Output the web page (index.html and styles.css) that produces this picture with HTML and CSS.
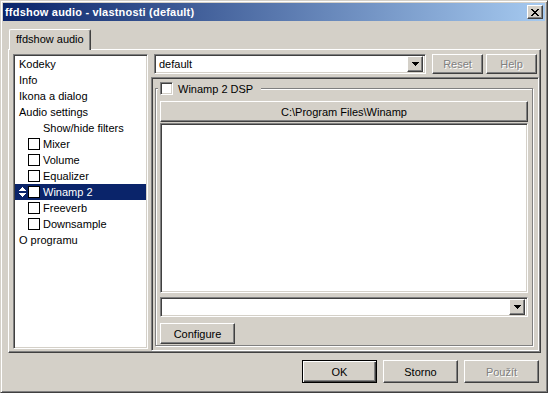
FILE: index.html
```html
<!DOCTYPE html>
<html lang="cs">
<head>
    <meta charset="UTF-8">
    <title>ffdshow audio - vlastnosti (default)</title>
    <link rel="stylesheet" href="styles.css">
</head>
<body>
    <div class="window">
        <div class="titlebar">
            <span class="title">ffdshow audio - vlastnosti (default)</span>
            <div class="btn close">
                <svg width="8" height="7" viewBox="0 0 8 7"><path d="M0 0h2v1h-2zM6 0h2v1h-2zM1 1h2v1h-2zM5 1h2v1h-2zM2 2h4v1h-4zM3 3h2v1h-2zM2 4h4v1h-4zM1 5h2v1h-2zM5 5h2v1h-2zM0 6h2v1h-2zM6 6h2v1h-2z" fill="#000"/></svg>
            </div>
        </div>

        <div class="tabs">
            <div class="tab">ffdshow audio</div>
        </div>

        <div class="panel">
            <div class="tree">
                <div class="item">Kodeky</div>
                <div class="item">Info</div>
                <div class="item">Ikona a dialog</div>
                <div class="item">Audio settings</div>
                <div class="item sub">Show/hide filters</div>
                <div class="item sub"><span class="tick"></span>Mixer</div>
                <div class="item sub"><span class="tick"></span>Volume</div>
                <div class="item sub"><span class="tick"></span>Equalizer</div>
                <div class="item selected">
                    <svg class="updown" width="7" height="11" viewBox="0 0 7 11"><path d="M3 0h1v1h1v1h1v1h1v1h-7v-1h1v-1h1v-1h1zM0 6h7v1h-1v1h-1v1h-1v1h-1v-1h-1v-1h-1v-1h-1z" fill="#fff"/></svg>
                    <span class="tick"></span>Winamp 2
                </div>
                <div class="item sub"><span class="tick"></span>Freeverb</div>
                <div class="item sub"><span class="tick"></span>Downsample</div>
                <div class="item">O programu</div>
            </div>

            <div class="page">
                <div class="toprow">
                    <div class="field combo preset">
                        <span class="value">default</span>
                        <div class="btn drop">
                            <svg width="7" height="4" viewBox="0 0 7 4"><path d="M0 0h7v1h-1v1h-1v1h-1v1h-1v-1h-1v-1h-1v-1h-1z" fill="#000"/></svg>
                        </div>
                    </div>
                    <div class="btn small disabled">Reset</div>
                    <div class="btn small disabled">Help</div>
                </div>

                <div class="frame">
                    <div class="group">
                        <div class="legend">
                            <span class="field check"></span>
                            <span>Winamp 2 DSP</span>
                        </div>
                        <div class="btn path">C:\Program Files\Winamp</div>
                        <div class="field list"></div>
                        <div class="field combo plugin">
                            <span class="value"></span>
                            <div class="btn drop">
                                <svg width="7" height="4" viewBox="0 0 7 4"><path d="M0 0h7v1h-1v1h-1v1h-1v1h-1v-1h-1v-1h-1v-1h-1z" fill="#000"/></svg>
                            </div>
                        </div>
                        <div class="btn configure">Configure</div>
                    </div>
                </div>
            </div>
        </div>

        <div class="footer">
            <div class="btn dialog default">OK</div>
            <div class="btn dialog">Storno</div>
            <div class="btn dialog disabled">Použít</div>
        </div>
    </div>
</body>
</html>
```

FILE: styles.css
```css
* {
    box-sizing: border-box;
}
body {
    margin: 0;
    background: #d4d0c8;
    font-family: "Liberation Sans", Arial, sans-serif;
    font-size: 11px;
    color: #000;
}
.window {
    width: 548px;
    height: 393px;
    background: #d4d0c8;
    border: 1px solid;
    border-color: #d4d0c8 #404040 #404040 #d4d0c8;
    box-shadow: inset 1px 1px #fff, inset -1px -1px #808080;
    padding: 2px;
    display: flex;
    flex-direction: column;
}

/* title bar */
.titlebar {
    height: 18px;
    flex: none;
    background: linear-gradient(to right, #0a246a, #a6caf0);
    display: flex;
    align-items: center;
    justify-content: space-between;
    padding: 0 2px;
}
.title {
    color: #fff;
    font-weight: bold;
    letter-spacing: 0.2px;
}

/* 3d buttons */
.btn {
    background: #d4d0c8;
    border: 1px solid;
    border-color: #fff #404040 #404040 #fff;
    box-shadow: inset -1px -1px #808080;
    display: flex;
    align-items: center;
    justify-content: center;
    white-space: nowrap;
}
.btn.disabled {
    color: #808080;
    text-shadow: 1px 1px #fff;
}
.close {
    width: 16px;
    height: 14px;
}

/* sunken fields */
.field,
.tree {
    background: #fff;
    border: 1px solid;
    border-color: #808080 #fff #fff #808080;
    box-shadow: inset 1px 1px #404040, inset -1px -1px #d4d0c8;
}

/* tabs */
.tabs {
    display: flex;
    margin: 8px 0 0 6px;
    flex: none;
}
.tab {
    position: relative;
    z-index: 1;
    height: 21px;
    margin-bottom: -1px;
    padding: 3px 6px 0 6px;
    background: #d4d0c8;
    border: 1px solid;
    border-bottom: none;
    border-color: #fff #404040 #404040 #fff;
    border-radius: 2px 2px 0 0;
    box-shadow: inset -1px 0 #808080;
}

.panel {
    width: 533px;
    height: 304px;
    margin-left: 5px;
    flex: none;
    border: 1px solid;
    border-color: #fff #404040 #404040 #fff;
    box-shadow: inset -1px -1px #808080;
    padding: 4px 2px 1px 4px;
    display: flex;
    align-items: flex-start;
    gap: 3px;
}

/* tree on the left */
.tree {
    width: 135px;
    height: 295px;
    flex: none;
    padding: 1px;
}
.item {
    height: 16px;
    padding-left: 4px;
    display: flex;
    align-items: center;
    white-space: nowrap;
}
.item.sub {
    padding-left: 28px;
}
.tick {
    width: 12px;
    height: 12px;
    margin-right: 3px;
    border: 1px solid #000;
    background: #fff;
    flex: none;
}
.item.sub .tick {
    margin-left: -15px;
}
.item.selected {
    background: #0a246a;
    color: #fff;
}
.updown {
    margin-right: 2px;
}

/* right side */
.page {
    width: 388px;
    height: 297px;
    flex: none;
    display: flex;
    flex-direction: column;
}
.toprow {
    height: 20px;
    display: flex;
    padding-left: 3px;
    gap: 3px;
}
.combo {
    display: flex;
    align-items: center;
    padding: 2px 2px 2px 4px;
}
.combo .value {
    flex: 1;
}
.preset {
    width: 272px;
    margin-right: 3px;
}
.drop {
    width: 16px;
    height: 16px;
    flex: none;
}
.small {
    width: 51px;
}
.frame {
    margin-top: 3px;
    height: 274px;
    border: 1px solid;
    border-color: #808080 #fff #fff #808080;
    box-shadow: inset 1px 1px #404040;
    padding: 10px 5px 4px 3px;
}
.group {
    height: 258px;
    border: 1px solid #808080;
    box-shadow: inset 1px 1px #fff, 1px 1px #fff;
    padding: 0 4px;
    display: flex;
    flex-direction: column;
    align-items: flex-start;
}
.legend {
    width: 103px;
    height: 13px;
    margin: -7px 0 0 -2px;
    padding-left: 2px;
    background: #d4d0c8;
    display: flex;
    align-items: center;
    gap: 5px;
}
.check {
    width: 13px;
    height: 13px;
    flex: none;
}
.path {
    width: 100%;
    height: 21px;
    margin-top: 6px;
}
.list {
    width: 100%;
    height: 170px;
    margin-top: 1px;
}
.plugin {
    width: 100%;
    height: 20px;
    margin-top: 4px;
}
.configure {
    width: 75px;
    height: 21px;
    margin-top: 6px;
}

/* dialog buttons */
.footer {
    display: flex;
    justify-content: flex-end;
    gap: 6px;
    margin-top: 7px;
    padding-right: 6px;
}
.dialog {
    width: 75px;
    height: 23px;
}
.dialog.default {
    border-color: #000;
    box-shadow: inset 1px 1px #fff, inset -1px -1px #404040, inset -2px -2px #808080;
}
```
